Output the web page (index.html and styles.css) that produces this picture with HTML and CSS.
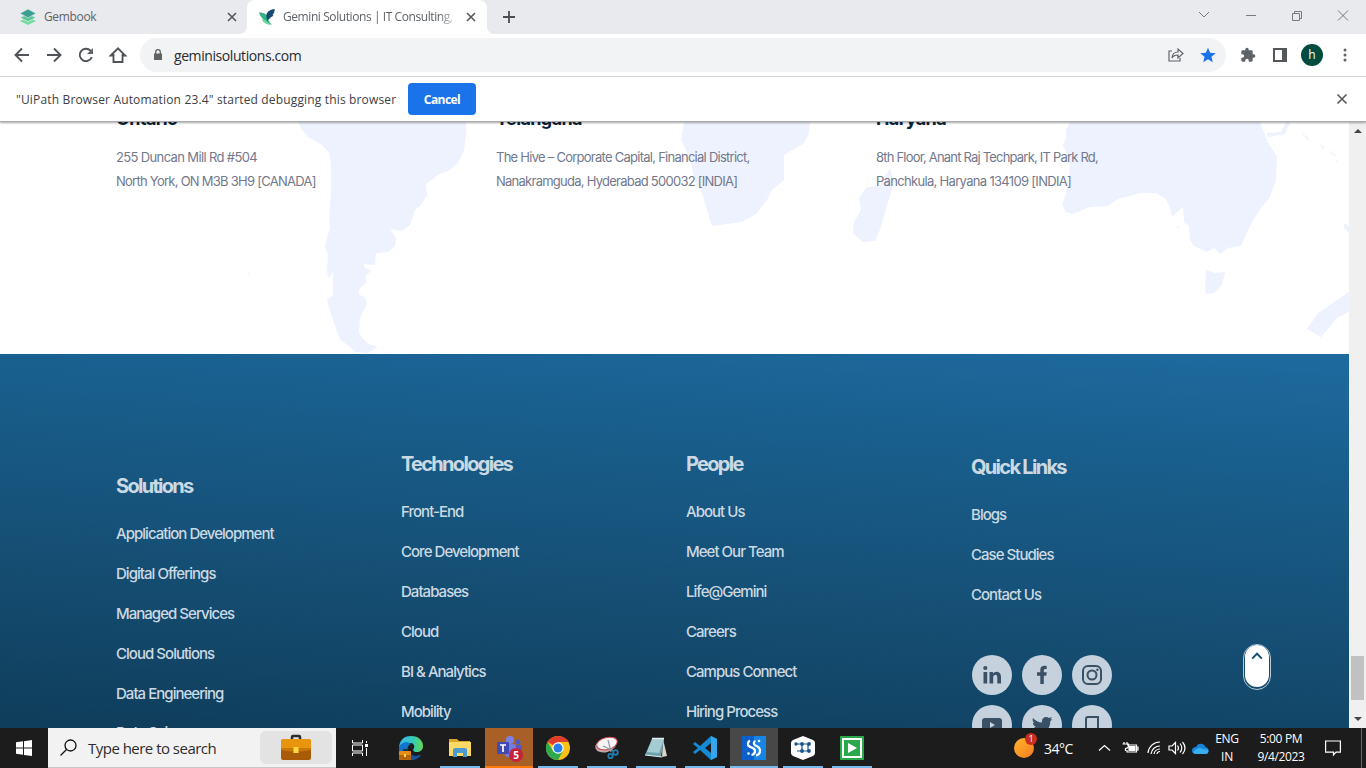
FILE: index.html
```html
<!DOCTYPE html>
<html lang="en">
<head>
<meta charset="utf-8">
<title>Gemini Solutions | IT Consulting</title>
<link rel="stylesheet" href="styles.css">
</head>
<body>
<header class="tabstrip">
  <div class="tab tab-idle">
    <svg class="fav" viewBox="0 0 16 16"><path d="M8 8.2 0 12l8 4 8-4z" fill="#73dda0"/><path d="M8 5 0 8.6l8 4 8-4z" fill="#59c795" stroke="#e8eaed" stroke-width=".7"/><path d="M8 0 0 4.4l8 4.4 8-4.4z" fill="#3b9e92" stroke="#e8eaed" stroke-width=".6"/></svg>
    <span class="tab-title t1">Gembook</span>
    <svg class="x" viewBox="0 0 10 10"><path d="m1 1 8 8M9 1 1 9"/></svg>
  </div>
  <div class="tab tab-active">
    <svg class="fav" viewBox="0 0 16 16"><path d="M0 3.500C3 3 6 4 8 6.500L9 11l3.500 4.500C9 16 5 14.500 3 10.500l2 .3C2.500 9 .8 6.500 0 3.500z" fill="#35b487"/><path d="M3 10.500c2-.2 4 .8 5 2.500l4.500 2.500C9 16 5 14.500 3 10.500z" fill="#6fdd9b"/><path d="M15.700 0C11 .5 6.500 3 7.500 8c.2 2 .8 3.500 1.500 4.500 0-1.800.8-3 3-3.500l-1-.7c2-.3 3-1 3.500-2.200l-1-.3C15 4.500 15.700 2.500 15.700 0z" fill="#164a6e"/></svg>
    <span class="tab-title t2">Gemini Solutions | IT Consulting,</span>
    <svg class="x" viewBox="0 0 10 10"><path d="m1 1 8 8M9 1 1 9"/></svg>
  </div>
  <svg class="plus" viewBox="0 0 12 12"><path d="M6 0v12M0 6h12"/></svg>
  <svg class="winctl" viewBox="0 0 154 16"><path d="m5 5 5 5 5-5M52 8.500h10M98.500 6.500h7v7h-7zM100.500 6.500v-2h7v7h-2M144 3.500l10 10M154 3.500l-10 10"/></svg>
</header>
<nav class="toolbar">
  <div class="navs">
    <svg viewBox="0 0 16 16"><path d="M15 8H2M8 1.500 1.500 8 8 14.500"/></svg>
    <svg viewBox="0 0 16 16"><path d="M1 8h13M8 1.500 14.500 8 8 14.500"/></svg>
    <svg viewBox="0 0 16 16"><path d="M13.800 10A6.200 6.200 0 1 1 12.500 3.700L14 5.200"/><path d="M15 1v6H9z" fill="#5f6368" stroke="none"/></svg>
    <svg viewBox="0 0 16 16"><path d="M3.500 7v8h9V7M.8 8.500 8 1.300l7.200 7.200z" /><path d="M4.500 6.500h7v4h-7z" fill="#fff" stroke="none"/></svg>
  </div>
  <div class="omnibox">
    <svg class="lock" viewBox="0 0 8 12"><path d="M0 4.500h8V11H0z" fill="#5f6368"/><path d="M1.700 5V3a2.300 2.300 0 0 1 4.600 0v2" fill="none" stroke="#5f6368" stroke-width="1.300"/></svg>
    <span class="url">geminisolutions.com</span>
    <svg class="share" viewBox="0 0 16 16"><path d="M4 4H1v10h11v-3M4 11c.3-4 2.500-6 6-6V2l5 4.500L10 11V8c-3 0-4.700.8-6 3z"/></svg>
    <svg class="star" viewBox="0 0 24 24"><path d="m12 1 3.200 7.600 8.300.7-6.300 5.400 1.900 8.100-7.100-4.300-7.100 4.300 1.900-8.100L.5 9.300l8.300-.7z"/></svg>
  </div>
  <svg class="ext" viewBox="0 0 24 24"><path d="M20.500 11H19V7a2 2 0 0 0-2-2h-4V3.500a2.500 2.500 0 0 0-5 0V5H4a2 2 0 0 0-2 2v3.800h1.500a2.700 2.700 0 0 1 0 5.400H2V20c0 1.100.9 2 2 2h3.800v-1.500a2.700 2.700 0 0 1 5.400 0V22H17a2 2 0 0 0 2-2v-4h1.500a2.500 2.500 0 0 0 0-5z"/></svg>
  <svg class="side" viewBox="0 0 14 14"><path d="M0 0h14v14H0zM2 2v10h7V2z" fill-rule="evenodd"/></svg>
  <span class="avatar">h</span>
  <svg class="dots" viewBox="0 0 4 14"><circle cx="2" cy="2" r="1.500"/><circle cx="2" cy="7" r="1.500"/><circle cx="2" cy="12" r="1.500"/></svg>
</nav>
<div class="infobar">
  <span class="info-text">"UiPath Browser Automation 23.4" started debugging this browser</span>
  <button class="cancel">Cancel</button>
  <svg class="x info-x" viewBox="0 0 10 10"><path d="m.5.5 9 9M9.500.5l-9 9"/></svg>
</div>
<div class="viewport">
  <main class="page">
    <section class="offices">
      <svg class="map" viewBox="0 122 1349 232"><path d="M298 122L302 130 308 137 322 145 329 152 331 165V190L329 220 330 228 327 238 325 246 328 255 327 272 329 278 333 272V295L327 300 329 308 333 320 336 328 340 340 348 345 355 352 368 353 378 347 369 344 362 338 359 332 360 318 367 304 365 297 358 294 360 288 366 283V275L371 271 364 267V264L375 265 376 253 388 252 395 246 396 238 390 229 402 231 410 225 415 210 421 205 427 195 426 184 438 175 450 170 458 163 464 150 466 135V122z"/><path d="M684 122h126l-1 11-5 10-20 12 0 25-12 10-5 10-11 14-14 8-30 4-4-13-6-20-8-14-4-21-9-18zM890 168l4 13-13 46-6 14-12 1-10-9 1-11 7-12-2-12 7-10 14-3z"/><path d="M1070 122L1066 130V138L1063 145 1067 155 1070 165 1069 180 1066 193 1062 205 1066 212 1073 214 1090 207 1108 206 1118 199 1130 196 1140 193H1156L1166 199 1170 208 1172 217 1183 207 1184 222 1189 226 1190 240 1194 246 1207 252 1214 248 1220 254 1228 248 1241 246 1248 230 1258 212 1270 197 1276 180 1277 157 1268 143 1260 122z"/><path d="M1206 270l9 3 10-1-3 13-8 8-8 1-1-8zM1349 292v20l-12 6-16 19-14-8 11-16zM1344 223l5 3v7l-5-5zM1266 133l15-1 5-10 4 1-5 11-17 3zM1300 132l9 6-1 2zM1319 143l6 5-2 1zM1328 150l8 5-1 2zM1334 158l5 4-1 1zM247 269l3 6-2-2zM252 313h2l-1 1zM1176 227l4-1-1 2z"/></svg>
      <div class="office"><h3>Ontario</h3><p class="a1">255 Duncan Mill Rd #504</p><p>North York, ON M3B 3H9 [CANADA]</p></div>
      <div class="office"><h3>Telangana</h3><p>The Hive – Corporate Capital, Financial District,</p><p>Nanakramguda, Hyderabad 500032 [INDIA]</p></div>
      <div class="office"><h3>Haryana</h3><p class="a5">8th Floor, Anant Raj Techpark, IT Park Rd,</p><p class="a6">Panchkula, Haryana 134109 [INDIA]</p></div>
    </section>
    <footer class="footer">
      <div class="col col-sol"><h4>Solutions</h4><a>Application Development</a><a>Digital Offerings</a><a>Managed Services</a><a>Cloud Solutions</a><a>Data Engineering</a><a class="cut">Data Science</a></div>
      <div class="col"><h4>Technologies</h4><a>Front-End</a><a>Core Development</a><a>Databases</a><a>Cloud</a><a>BI &amp; Analytics</a><a>Mobility</a></div>
      <div class="col"><h4>People</h4><a>About Us</a><a>Meet Our Team</a><a>Life@Gemini</a><a>Careers</a><a>Campus Connect</a><a>Hiring Process</a></div>
      <div class="col col-quick"><h4>Quick Links</h4><a>Blogs</a><a>Case Studies</a><a>Contact Us</a>
        <div class="social">
          <svg viewBox="0 0 40 40"><circle cx="20" cy="20" r="20"/><path class="ink" d="M11.500 17h3.700v11.500h-3.700zM17.500 17H21v1.700c2-3.200 8-2.600 8 2.800v7h-3.700v-6.300c0-3.500-4.100-3.200-4.100 0v6.300h-3.700z"/><circle class="ink" cx="13.300" cy="13" r="2.100"/></svg>
          <svg viewBox="0 0 40 40"><circle cx="20" cy="20" r="20"/><path class="ink" d="M18.300 29v-8.300H15v-3.500h3.300v-2.500c0-3.400 2.600-4.500 6.400-3.700v3c-2.200-.2-2.900.1-2.900 1.700v1.500h3l-.6 3.500h-2.400V29z"/></svg>
          <svg viewBox="0 0 40 40"><circle cx="20" cy="20" r="20"/><rect class="line" x="11" y="11" width="18" height="18" rx="5"/><circle class="line" cx="20" cy="20" r="4.500"/><circle class="ink" cx="25.400" cy="14.700" r="1.200"/></svg>
          <svg viewBox="0 0 40 40"><circle cx="20" cy="20" r="20"/><path class="ink" fill-rule="evenodd" d="M13 13h14q3 0 3 3v8q0 3-3 3H13q-3 0-3-3v-8q0-3 3-3zm5 4v6l5-3z"/></svg>
          <svg viewBox="0 0 40 40"><circle cx="20" cy="20" r="20"/><path class="ink" d="M11 13c2.500 3 5.500 4.300 9 4.500-.8-5 4-7 7-4.500l3-1-1.700 2.600 2-.5-2.100 2.400C28.500 25 20 31 10.500 26.500c2.300.2 4.200-.4 5.600-1.500-2-.3-3.200-1.500-3.800-3h1.800c-2-.8-3.100-2.200-3.200-4.200l1.700.5c-2-1.600-2.400-3.500-1.600-5.300z"/></svg>
          <svg viewBox="0 0 40 40"><circle cx="20" cy="20" r="20"/><path class="line" d="M26 15V12H16q-2 0-2 2v8.500q0 2 2 2h10V15M14.500 25q2 4 6 4 5.500 0 5.500-5"/></svg>
        </div>
      </div>
    </footer>
    <div class="totop"><svg viewBox="0 0 12 8"><path d="m1.200 6.600 4.800-5 4.800 5"/></svg></div>
  </main>
  <aside class="scroll"><i class="up"></i><i class="thumb"></i><i class="down"></i></aside>
</div>
<div class="taskbar">
  <div class="start"><svg viewBox="0 0 16 16"><path d="M0 2.300 7 1.300v6.200H0zM8 1.200 16 0v7.500H8zM0 8.500h7v6.200l-7-1zM8 8.500h8V16l-8-1.100z" fill="#fff"/></svg></div>
  <div class="search">
    <svg class="glass" viewBox="0 0 17 17"><circle cx="10.500" cy="6.500" r="5.500"/><path d="M6.500 10.500.5 16.500"/></svg>
    <span class="search-text">Type here to search</span>
    <span class="chip"><svg viewBox="0 0 30 26"><path d="M11 4V2q0-1 1-1h6q1 0 1 1v2" fill="none" stroke="#292a2b" stroke-width="2.500"/><rect y="4" width="30" height="12" rx="1.500" fill="#e8940c"/><path d="M0 14h30v9q0 2-2 2H2q-2 0-2-2z" fill="#a85c07"/><path d="M0 15q15 3 30 0v-2H0z" fill="#c9770b"/><rect x="12.500" y="12" width="5" height="6" fill="#ffd83d"/></svg></span>
  </div>
  <div class="task taskview"><svg viewBox="0 0 16 16"><path d="M.5 0v3h10V0M.5 16v-3h10v3M.5 5h10v6H.5zM14.500 1v2M14.500 8v8" fill="none" stroke="#fff"/><path d="M13 4h3v3h-3z" fill="#fff"/></svg></div>
  <div class="task"><svg class="ico" viewBox="0 0 24 24"><defs><linearGradient id="e1" x2="1"><stop stop-color="#35b8ef"/><stop offset=".6" stop-color="#35cbb5"/><stop offset="1" stop-color="#65d94f"/></linearGradient></defs><path d="M0 11C1 3 6 0 12 0c8 0 12 5 12 10 0 4-3 6-6 6-4 0-4.500-2-3-4 1-3-1-5-4-5-5 0-8 1-11 4z" fill="url(#e1)"/><path d="M0 11c2-5 9-6 12-3-3 1-4 4-3 7 2 5 7 6 13 4-3 4-7 5-11 5C4 24-1 17 0 11z" fill="#1274ca"/><path d="M9 12c-1 6 5 10 13 7-5 6-14 6-17-1-1-3 1-5 4-6z" fill="#15559f"/><path d="M4 14h5" stroke="#222" stroke-width="1.500"/><rect y="15" width="12" height="9" rx="1" fill="#e88b15"/><path d="M0 19h12v5H0z" fill="#b8640c"/><path d="M5 18h2v3H5z" fill="#ffdc50"/></svg></div>
  <div class="task open"><svg class="ico" viewBox="0 0 24 24"><path d="M1 3h8l2 2h11v4H1z" fill="#dca527"/><rect x="1" y="6" width="22" height="14" fill="#ffd966"/><path d="M5 21v-7q0-2 2-2h10q2 0 2 2v7h-4v-4H9v4z" fill="#4a9bd0"/></svg></div>
  <div class="task open teams"><svg class="ico" viewBox="0 0 24 24"><circle cx="13" cy="4" r="4" fill="#7b83eb"/><circle cx="21" cy="6" r="2.500" fill="#5059c9"/><rect x="8" y="8" width="11" height="13" rx="3" fill="#747be1"/><path d="M19 9h6v7q0 3-4 3z" fill="#5059c9"/><rect y="6" width="12" height="12" rx="1" fill="#4149b5"/><path d="M3 9h6M6 9v7" stroke="#fff" stroke-width="1.700"/></svg><b class="badge">5</b></div>
  <div class="task open"><svg class="ico" viewBox="0 0 24 24"><circle cx="12" cy="12" r="12" fill="#fbc116"/><path d="M12 12 1.600 6A12 12 0 0 1 22.400 6H12z" fill="#e33b2e"/><path d="M1.600 6A12 12 0 0 0 12 24l5-9-5 2-5-2z" fill="#2da94f"/><circle cx="12" cy="12" r="5.700" fill="#fff"/><circle cx="12" cy="12" r="4.500" fill="#287de8"/></svg></div>
  <div class="task open"><svg class="ico" viewBox="0 0 24 24"><ellipse cx="11" cy="9" rx="11" ry="7" transform="rotate(-18 11 9)" fill="#c6a4a5"/><ellipse cx="12" cy="7.500" rx="10.500" ry="6" transform="rotate(-14 12 7.500)" fill="#f8f4f4" stroke="#c9484c" stroke-width="1"/><path d="m13 4 3 12M8 10l11 5" stroke="#8f9aa5" stroke-width="1.200"/><g fill="none" stroke="#247cb0" stroke-width="1.800"><circle cx="15.500" cy="20" r="2.200"/><circle cx="20.500" cy="16.500" r="2.300"/></g></svg></div>
  <div class="task open"><svg class="ico" viewBox="0 0 24 24"><path d="m19 3 4 17-5 1z" fill="#d8d6ca"/><path d="M8 3h12l-3 18L1 19z" fill="#6fa3ae"/><path d="M8 3h12l-5 14L3 16z" fill="#a3cbd1"/><path d="M8 2.500h12" stroke="#e1eef0" stroke-width="1.500"/><path d="m1 19 17 2" stroke="#e1eef0"/></svg></div>
  <div class="task open"><svg class="ico" viewBox="0 0 24 24"><path d="m18 0 6 3v18l-6 3L7 14l-5 4-2-2 5-4-5-4 2-2 5 4zm0 7-6 5 6 5z" fill="#168bd5"/><path d="m18 0 6 3v18l-6 3z" fill="#35a5ee"/></svg></div>
  <div class="task open current"><svg class="ico" viewBox="0 0 24 24"><path d="M0 0h24v24H0z" fill="#1685e5"/><path d="M0 0h12v24H0z" fill="#0b60cb"/><path d="M8 4.500C5.500 6 5 9 7.500 10.500c2 1.200 5.500 1.300 5.500 4.500 0 2-1.500 3.500-3.500 4M13.500 5c-2 .5-2.500 3.500 0 4.500s4.500 2.500 4.500 5c0 2.500-1.500 4.500-4 5" fill="none" stroke="#fff" stroke-width="2.300"/><circle cx="17" cy="5" r="1.300" fill="#fff"/><circle cx="6.500" cy="17.500" r="1.300" fill="#fff"/></svg></div>
  <div class="task open"><svg class="ico" viewBox="0 0 24 24"><path d="M12 0 22 4q2 1 2 3v10q0 2-2 3l-10 4-10-4q-2-1-2-3V7q0-2 2-3z" fill="#fff"/><path d="M4.500 8h14M6 15h13M11 8v7M17 8v7" stroke="#17558b" stroke-width="1.200"/><g fill="#17558b"><circle cx="5" cy="8" r="1.700"/><circle cx="11" cy="8" r="1.900"/><circle cx="18" cy="8" r="1.900"/><circle cx="11" cy="15" r="1.900"/><circle cx="18" cy="15" r="1.900"/></g></svg></div>
  <div class="task open"><svg class="ico" viewBox="0 0 24 24"><path d="M0 0h24v24H0z" fill="#2ba84a"/><path d="M3 3h18v18H3z" fill="none" stroke="#fff" stroke-width="2"/><path d="m8 7 9 5-9 5z" fill="#fff"/></svg></div>
  <div class="tray">
    <span class="weather"><i>1</i></span><span class="temp">34°C</span>
    <svg class="tray-icons" viewBox="0 0 112 20"><g fill="none" stroke="#fff" stroke-width="1.200"><path d="m1 12.500 5.500-5 5.500 5"/><path d="M29 7h9.500v7H29v-2M38.500 9h1.500v3h-1.500M26 4v2M29 4v2M24.500 6h6v2q0 2-3 2.500V13"/><path d="M31 8.500h6v4h-6z" fill="#fff"/><path d="M50 15a12 12 0 0 1 12-11M53 16a9 9 0 0 1 9-8M56 16a6 6 0 0 1 6-5M59 16a3 3 0 0 1 3-2.500"/><path d="M71 8h3l3.500-3.500v11L74 12h-3zM79.500 7.500q2 2.500 0 5M82 5.500q3.500 4.500 0 9M84.500 4q5 6 0 12"/></g><path d="M98 16q-4 0-4-3.500T98 9q2-4.500 6.500-3 2 .5 3 3 3 .5 3 3.500t-3 3.500z" fill="#1683d8"/><path d="M95 14q5-6 10-3 5 0 5.500 1.500 0 3.500-3 3.500H98q-2 0-3-2z" fill="#36aef0"/></svg>
    <span class="lang">ENG<br>IN</span><span class="clock"><span>5:00 PM</span><span>9/4/2023</span></span>
    <svg class="notice" viewBox="0 0 16 16"><path d="M.6 1h14.800v11.200H11L8.500 15v-2.800H.6z" fill="none" stroke="#fff" stroke-width="1.200"/></svg><i class="peek"></i>
  </div>
</div>
</body>
</html>
```
FILE: styles.css
```css
*{box-sizing:border-box}
body{margin:0;width:1366px;height:768px;overflow:hidden;display:flex;flex-direction:column;background:#fff;font-family:"Open Sans","Noto Sans",sans-serif;font-size:12px;color:#3c4043}
svg{display:block;flex:none;overflow:visible}
h3,h4,p{margin:0}
span,a{white-space:nowrap}
.tabstrip{height:34px;flex:none;background:#e8eaed;display:flex;align-items:center}
.tab{height:34px;display:flex;align-items:center;color:#5f6368}
.tab-idle{width:247px;padding:0 10px 0 20px}
.tab-active{width:240px;padding:0 11px 0 12px;background:#fff;border-radius:8px 8px 0 0;position:relative}
.tab-active::before,.tab-active::after{content:"";position:absolute;bottom:0;width:8px;height:8px}
.tab-active::before{left:-8px;background:radial-gradient(circle at 0 0,transparent 8px,#fff 8px)}
.tab-active::after{right:-8px;background:radial-gradient(circle at 100% 0,transparent 8px,#fff 8px)}
.fav{width:16px;height:16px;margin-right:8px}
.tab-title{flex:1;overflow:hidden;line-height:18px;min-width:0}
.t1{letter-spacing:-.35px}
.t2{letter-spacing:-.42px;-webkit-mask-image:linear-gradient(90deg,#000 85%,rgba(0,0,0,.2) 94%)}
.x{width:10px;height:10px;fill:none;stroke:#54575b;stroke-width:1.6}
.plus{width:12px;height:12px;margin-left:16px;stroke:#4a4d51;stroke-width:1.8}
.winctl{width:154px;height:16px;margin-left:auto;margin-right:18px;margin-bottom:4px;fill:none;stroke:#777a7e;stroke-width:1}
.toolbar{height:43px;flex:none;border-bottom:1px solid #dadce0;display:flex;align-items:center;padding:0 0 0 14px}
.navs{display:flex;gap:16px;width:126px;flex:none}
.navs svg{width:16px;height:16px;fill:none;stroke:#505458;stroke-width:1.9}
.omnibox{width:1086px;height:34px;flex:none;border-radius:17px;background:#f1f3f4;display:flex;align-items:center;padding:0 10px 0 14px}
.lock{width:8px;height:12px}
.url{font-size:14px;color:#292b2e;margin-left:12px;margin-right:auto;letter-spacing:-.42px}
.share{width:16px;height:16px;fill:none;stroke:#5f6368;stroke-width:1.2}
.star{width:16px;height:16px;margin-left:16px;fill:#1a73e8}
.ext{width:16px;height:16px;margin-left:14px;fill:#5f6368}
.side{width:14px;height:14px;margin-left:17px;fill:#54575b}
.avatar{width:22px;height:22px;margin-left:14px;flex:none;border-radius:50%;background:#004d40;color:#fff;text-align:center;line-height:21px}
.dots{width:4px;height:14px;margin-left:20px;fill:#5f6368}
.infobar{height:45px;flex:none;padding:0 19px 0 16px;display:flex;align-items:center;position:relative;z-index:2;background:#fff;border-bottom:1px solid #aaacaf;box-shadow:0 1px 2px rgba(0,0,0,.35)}
.info-text{letter-spacing:.16px;width:380px}
.cancel{width:68px;height:32px;margin-left:12px;padding:0;border:0;border-radius:4px;background:#1a73e8;color:#fff;font:700 12px "Open Sans",sans-serif;letter-spacing:-.55px}
.info-x{margin-left:auto}
.viewport{height:606px;flex:none;display:flex}
.page{width:1349px;height:606px;overflow:hidden;position:relative;font-family:Inter,sans-serif}
.offices{height:232px;position:relative;display:flex;padding-left:116px;overflow:hidden}
.map{position:absolute;left:0;top:0;width:1349px;height:232px;fill:#eef2fe}
.office{width:380px;flex:none;position:relative;font-size:13px;line-height:24px;color:#73798c}
.office h3{height:24px;margin-top:-15px;margin-bottom:14px;font-size:18px;color:#0b2239;letter-spacing:-.6px}
.office p{letter-spacing:-.74px;white-space:nowrap}
.office .a1{letter-spacing:-.64px}
.office .a5{letter-spacing:-.8px}
.office .a6{letter-spacing:-.68px}
.footer{height:374px;overflow:hidden;display:flex;padding:98px 0 0 116px;background:linear-gradient(184deg,#1e6a9f 0%,#19608f 22%,#154e73 63%,#0f3d5b 100%)}
.col{width:285px;flex:none;display:flex;flex-direction:column;color:#cbd9e3;font-size:15px;font-weight:500;letter-spacing:-.97px}
.col-sol{padding-top:22px}
.col-quick{padding-top:3px}
.col h4{font-size:20px;line-height:24px;font-weight:700;letter-spacing:-1.7px;margin-bottom:16px}
.col a{height:40px;line-height:40px;flex:none}
.col .cut{line-height:38px}
.social{display:grid;grid-template-columns:repeat(3,40px);gap:10px;margin:40px 0 0 1px}
.social svg{width:40px;height:40px;fill:#c5d2dd}
.social .ink{fill:#3a5064}
.social .line{fill:none;stroke:#3a5064;stroke-width:2}
.totop{position:absolute;left:1245px;top:523px;width:24px;height:42px;border-radius:12px;background:#fff;display:flex;justify-content:center;padding-top:7px}
.totop::after{content:"";position:absolute;inset:-1px -2px -3px;border:1px solid #b5cbd7;border-radius:15px}
.totop svg{width:12px;height:8px;fill:none;stroke:#154e73;stroke-width:2}
.scroll{width:17px;background:#f0f0f0;display:flex;flex-direction:column;align-items:center}
.up,.down{border:4px solid transparent;width:0;height:0}
.up{border-top:0;border-bottom:4px solid #444;margin-top:7px}
.thumb{width:13px;height:44px;background:#c1c1c1;margin-top:523px}
.down{border-bottom:0;border-top:4px solid #444;margin-top:17px}
.taskbar{height:40px;flex:none;background:#1c1c1c;display:flex;color:#fff;position:relative}
.start{width:48px;display:flex;align-items:center;justify-content:center}
.start svg{width:16px;height:16px}
.search{width:288px;background:#f2f2f2;border-bottom:1px solid #c6c6c6;display:flex;align-items:center;padding-left:12px;color:#2d2d2d}
.glass{width:17px;height:17px;fill:none;stroke:#111;stroke-width:1.3}
.search-text{width:172px;margin-left:11px;font-size:15px;letter-spacing:-.52px}
.chip{width:72px;height:33px;border-radius:6px;background:#e3e3e3;display:flex;align-items:center;justify-content:center}
.chip svg{width:30px;height:26px}
.task{width:48px;height:40px;margin-right:1px;flex:none;display:flex;align-items:center;justify-content:center;position:relative}
.taskview{width:50px;padding-right:2px}
.taskview svg{width:16px;height:16px}
.ico{width:24px;height:24px}
.open::after{content:"";position:absolute;left:4px;right:4px;bottom:0;height:2px;background:#76b9ed}
.teams{background:#a86027}
.teams::after{left:0;right:0;background:#ff7a08}
.current{background:#484848}
.current::after{left:0;right:0}
.badge{position:absolute;left:24px;top:20px;width:14px;height:14px;border-radius:50%;background:#c4223d;font-size:10px;line-height:14px;text-align:center}
.tray{margin-left:auto;display:flex;align-items:center;height:40px}
.weather{width:20px;height:20px;border-radius:50%;background:linear-gradient(135deg,#ffb52b,#f47c22);position:relative}
.weather i{position:absolute;left:11px;top:-5px;width:12px;height:12px;border-radius:50%;background:#c92e20;font:9px/12px "Open Sans",sans-serif;text-align:center}
.temp{font-size:14px;width:56px;margin-left:10px;letter-spacing:-.5px}
.tray-icons{width:112px;height:20px;margin-left:-2px}
.lang{width:32px;margin-left:1px;text-align:center;line-height:18px;letter-spacing:-.3px}
.clock{width:60px;margin-left:8px;display:flex;flex-direction:column;text-align:center;line-height:18px;letter-spacing:-.35px}
.notice{width:16px;height:16px;margin-left:14px}
.peek{width:1px;height:40px;margin:0 4px 0 20px;background:#66696c}
```
